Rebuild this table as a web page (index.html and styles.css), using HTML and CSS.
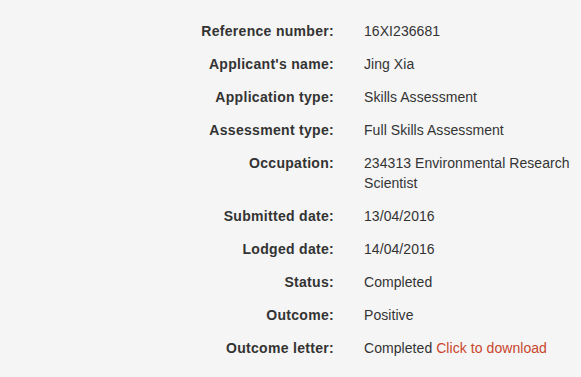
FILE: index.html
```html
<!DOCTYPE html>
<html lang="en">

<head>
    <meta charset="UTF-8">
    <meta name="viewport" content="width=device-width, initial-scale=1.0">
    <link rel="stylesheet" href="styles.css">
    <title>Application details</title>
</head>

<body>
    <dl class="details">
        <dt>Reference number:</dt>
        <dd>16XI236681</dd>
        <dt>Applicant's name:</dt>
        <dd>Jing Xia</dd>
        <dt>Application type:</dt>
        <dd>Skills Assessment</dd>
        <dt>Assessment type:</dt>
        <dd>Full Skills Assessment</dd>
        <dt>Occupation:</dt>
        <dd>234313 Environmental Research Scientist</dd>
        <dt>Submitted date:</dt>
        <dd>13/04/2016</dd>
        <dt>Lodged date:</dt>
        <dd>14/04/2016</dd>
        <dt>Status:</dt>
        <dd>Completed</dd>
        <dt>Outcome:</dt>
        <dd>Positive</dd>
        <dt>Outcome letter:</dt>
        <dd>Completed <a href="#" class="download">Click to download</a></dd>
    </dl>
</body>

</html>
```

FILE: styles.css
```css
* {
    margin: 0;
    padding: 0;
    box-sizing: border-box;
}

body {
    background: #f5f5f5;
    font-family: "Liberation Sans", Arial, sans-serif;
    font-size: 14px;
    line-height: 20px;
    color: #333;
}

.details {
    display: grid;
    grid-template-columns: 334px 1fr;
    column-gap: 30px;
    row-gap: 13px;
    padding-top: 21px;
}

.details dt {
    font-weight: bold;
    text-align: right;
    letter-spacing: 0.3px;
}

.details dd {
    letter-spacing: 0.06px;
}

.download {
    color: #c9452b;
    text-decoration: none;
}
```
